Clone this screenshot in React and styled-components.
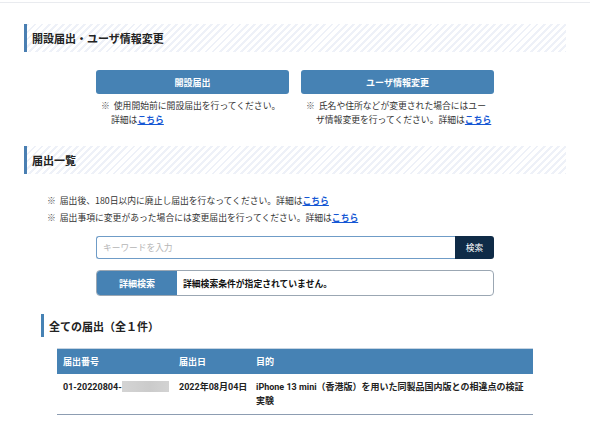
import React from "react";
import styled, { createGlobalStyle } from "styled-components";

const Global = createGlobalStyle`
  html, body { margin: 0; padding: 0; background: #fff; }
  body {
    font-family: "Noto Sans CJK JP", "Noto Sans", sans-serif;
    color: #333;
  }
  * { box-sizing: border-box; }
`;

const TopBar = styled.div`
  height: 3px;
  border-bottom: 1px solid #e9ebef;
`;

const Container = styled.div`
  padding: 0 24px;
  width: 590px;
`;

const SectionHeader = styled.h2`
  margin: ${(p) => p.$mt}px 0 0;
  height: 28px;
  display: flex;
  align-items: center;
  padding-left: 5px;
  border-left: 3px solid #4a7fb2;
  background: repeating-linear-gradient(
    135deg,
    #eef1f8 0px,
    #eef1f8 2px,
    #ffffff 2px,
    #ffffff 5px
  );
  font-size: 11px;
  font-weight: 700;
  color: #222;
`;

const ButtonGroup = styled.div`
  width: 398px;
  margin: 18px auto 0;
  display: grid;
  grid-template-columns: 1fr 1fr;
  column-gap: 12px;
`;

const Col = styled.div`
  display: flex;
  flex-direction: column;
`;

const BlueButton = styled.button`
  height: 24px;
  border: none;
  border-radius: 3px;
  background: #4682b4;
  color: #fff;
  font-family: inherit;
  font-size: 9px;
  font-weight: 700;
  cursor: pointer;
`;

const Note = styled.p`
  margin: ${(p) => p.$mt || 0}px 0 0;
  padding-left: ${(p) => p.$pl}px;
  text-indent: -10px;
  font-size: 8.8px;
  line-height: ${(p) => p.$lh}px;
  color: #333;
`;

const Mark = styled.span`
  display: inline-block;
  text-indent: 0;
  margin-right: 4px;
  color: #555;
`;

const Link = styled.a`
  color: #1557d4;
  font-weight: 700;
  text-decoration: underline;
  white-space: nowrap;
`;

const NotesBlock = styled.div`
  margin-top: 18px;
`;

const SearchRow = styled.div`
  width: 398px;
  margin: 10px auto 0;
  display: flex;
  height: 23px;
`;

const SearchInput = styled.input`
  flex: 1;
  height: 100%;
  border: 1px solid #6f9cc7;
  border-right: none;
  border-radius: 3px 0 0 3px;
  padding: 0 6px;
  font-family: inherit;
  font-size: 8.7px;
  color: #333;
  outline: none;
  &::placeholder { color: #b5b5b5; }
`;

const SearchButton = styled.button`
  width: 39px;
  height: 100%;
  border: none;
  border-radius: 0 3px 3px 0;
  background: #0f2b47;
  color: #fff;
  font-family: inherit;
  font-size: 8.7px;
`;

const DetailRow = styled.div`
  width: 398px;
  height: 26px;
  margin: 11px auto 0;
  display: flex;
  border: 1px solid #9ba7b3;
  border-radius: 4px;
  overflow: hidden;
`;

const DetailLabel = styled.div`
  width: 80px;
  background: #4682b4;
  color: #fff;
  font-size: 9px;
  font-weight: 700;
  display: flex;
  align-items: center;
  justify-content: center;
`;

const DetailText = styled.div`
  flex: 1;
  display: flex;
  align-items: center;
  padding-left: 6px;
  font-size: 8.8px;
  font-weight: 700;
  color: #111;
`;

const SubHeading = styled.h3`
  margin: 18px 0 0 17px;
  height: 23px;
  display: flex;
  align-items: center;
  padding-left: 5px;
  border-left: 3px solid #4682b4;
  font-size: 11px;
  font-weight: 700;
  color: #222;
`;

const Table = styled.table`
  width: 476px;
  margin: 11px auto 0;
  border-collapse: collapse;
  font-family: "Roboto", "Noto Sans CJK JP", sans-serif;
  font-size: 9px;
  table-layout: fixed;
`;

const Th = styled.th`
  width: ${(p) => (p.$w ? `${p.$w}px` : "auto")};
  height: 25px;
  background: #4682b4;
  border-top: 1px solid #c6d4e2;
  color: #fff;
  font-weight: 700;
  text-align: left;
  padding: 0 6px;
`;

const Td = styled.td`
  padding: 6px 6px;
  line-height: 14px;
  font-weight: 700;
  color: #222;
  vertical-align: top;
  border-bottom: 1px solid #8d9db2;
  white-space: ${(p) => (p.$nowrap ? "nowrap" : "normal")};
`;

const Blur = styled.span`
  display: inline-block;
  width: 47px;
  height: 11px;
  vertical-align: -2px;
  background: linear-gradient(90deg, #d4d4d4 0%, #cbcbcb 60%, #d3d3d3 100%);
`;

export default function App() {
  return (
    <>
      <Global />
      <TopBar />
      <Container>
        <SectionHeader $mt={21}>開設届出・ユーザ情報変更</SectionHeader>
        <ButtonGroup>
          <Col>
            <BlueButton>開設届出</BlueButton>
            <Note $mt={5} $pl={15} $lh={14}>
              <Mark>※</Mark>使用開始前に開設届出を行ってください。
              <br />
              詳細は<Link href="#">こちら</Link>
            </Note>
          </Col>
          <Col>
            <BlueButton>ユーザ情報変更</BlueButton>
            <Note $mt={5} $pl={15} $lh={14}>
              <Mark>※</Mark>氏名や住所などが変更された場合にはユーザ情報変更を行ってください。詳細は
              <Link href="#">こちら</Link>
            </Note>
          </Col>
        </ButtonGroup>

        <SectionHeader $mt={19}>届出一覧</SectionHeader>
        <NotesBlock>
          <Note $pl={33} $lh={17}>
            <Mark>※</Mark>届出後、180日以内に廃止し届出を行なってください。詳細は
            <Link href="#">こちら</Link>
          </Note>
          <Note $pl={33} $lh={17}>
            <Mark>※</Mark>届出事項に変更があった場合には変更届出を行ってください。詳細は
            <Link href="#">こちら</Link>
          </Note>
        </NotesBlock>

        <SearchRow>
          <SearchInput placeholder="キーワードを入力" />
          <SearchButton>検索</SearchButton>
        </SearchRow>

        <DetailRow>
          <DetailLabel>詳細検索</DetailLabel>
          <DetailText>詳細検索条件が指定されていません。</DetailText>
        </DetailRow>

        <SubHeading>全ての届出（全１件）</SubHeading>

        <Table>
          <thead>
            <tr>
              <Th $w={116}>届出番号</Th>
              <Th $w={77}>届出日</Th>
              <Th>目的</Th>
            </tr>
          </thead>
          <tbody>
            <tr>
              <Td $nowrap>
                01-20220804-<Blur />
              </Td>
              <Td $nowrap>2022年08月04日</Td>
              <Td>iPhone 13 mini（香港版）を用いた同製品国内版との相違点の検証実験</Td>
            </tr>
          </tbody>
        </Table>
      </Container>
    </>
  );
}
